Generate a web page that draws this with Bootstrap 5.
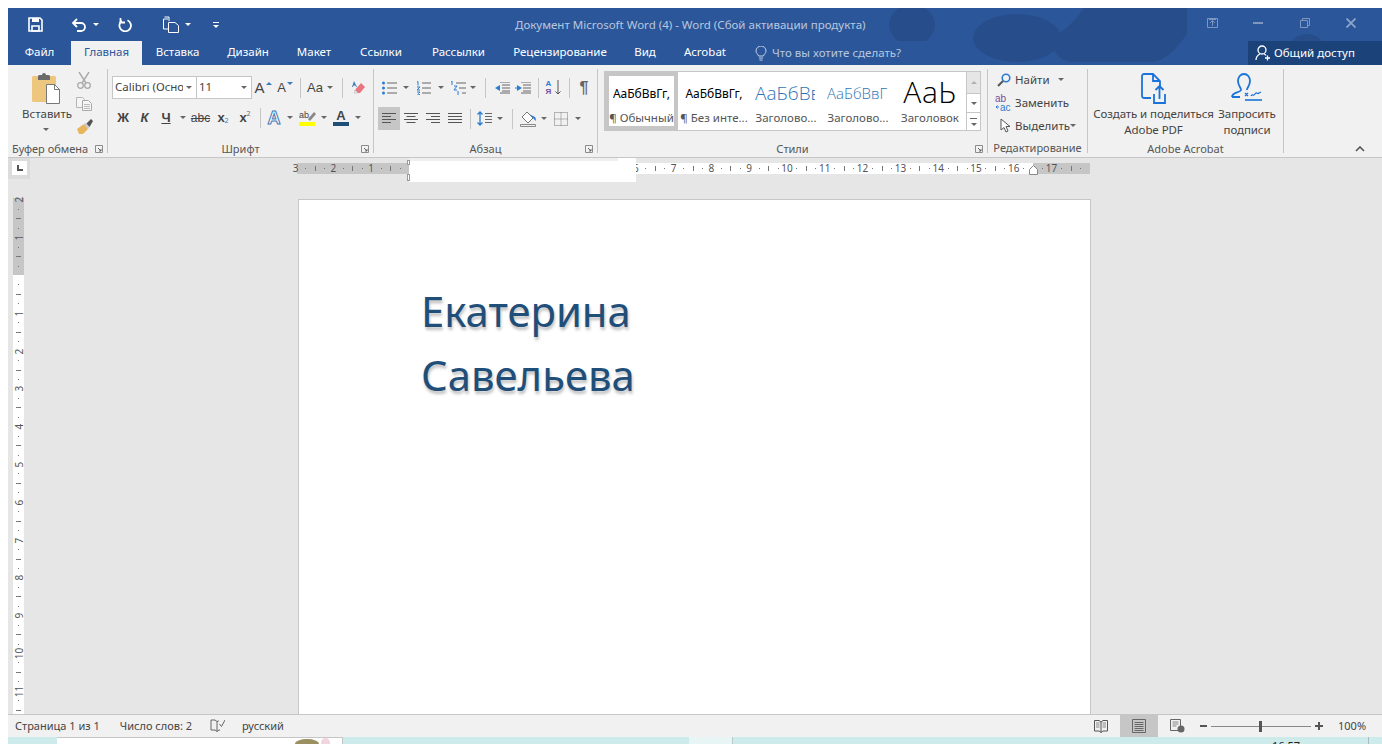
<!DOCTYPE html>
<html lang="ru">
<head>
<meta charset="UTF-8">
<meta name="viewport" content="width=device-width, initial-scale=1.0">
<title>Документ Microsoft Word (4) - Word</title>
<link rel="stylesheet" href="https://cdn.jsdelivr.net/npm/bootstrap@5.3.0/dist/css/bootstrap.min.css">
<style>
html, body { height: 744px; overflow: hidden; }
body { background: #fff; font-family: "Noto Sans", "Liberation Sans", sans-serif; font-size: 11.5px; color: #444; }
.word-win { margin-left: 8px; padding-top: 8px; height: 736px; }
svg { display: block; flex: none; }

/* шапка */
.word-head { height: 57px; background: #2b579a; position: relative; overflow: hidden; }
.head-art { position: absolute; left: 0; top: 0; }
.title-row { height: 33px; position: relative; }
.q-cell { height: 33px; flex: none; }
.q-save { width: 32px; margin-left: 11px; }
.q-undo { width: 24px; margin-left: 16px; }
.q-tri { width: 10px; }
.q-redo { width: 32px; margin-left: 8px; }
.q-new { width: 24px; margin-left: 18px; }
.q-more { width: 10px; margin-left: 18px; gap: 2px; }
.win-title { position: absolute; left: 507px; top: 8px; width: 350px; text-align: center; color: #b9c7de; font-size: 11.5px; line-height: 18px; white-space: nowrap; }
.win-btn { position: absolute; top: 0; width: 46px; height: 30px; }
.win-b1 { left: 1181px; } .win-b2 { left: 1227px; } .win-b3 { left: 1274px; } .win-b4 { left: 1320px; }
.tab-row { height: 24px; position: relative; }
.tab-row .nav-link { padding: 0; height: 24px; line-height: 22px; color: #fff; font-size: 11.5px; text-align: center; white-space: nowrap; }
.tab-row .nav-link.active-tab { background: #f1f1f1; color: #2b579a; }
.tab-file { width: 63px; } .tab-home { width: 71px; } .tab-ins { width: 71px; } .tab-des { width: 70px; }
.tab-lay { width: 62px; } .tab-ref { width: 72px; } .tab-mail { width: 83px; } .tab-rev { width: 120px; }
.tab-view { width: 50px; } .tab-acro { width: 70px; }
.tell-me { margin-left: 15px; color: #b9c7de; width: 217px; height: 24px; gap: 5px; background: #2b579a; }
.share-btn { position: absolute; left: 1240px; top: 0; width: 134px; height: 24px; background: #1c4379; color: #fff; padding-left: 7px; gap: 4px; }

/* лента */
.word-ribbon { height: 93px; background: #f1f1f1; border-bottom: 1px solid #c6c6c6; padding-top: 4px; position: relative; }
.rb-grp { height: 84px; border-right: 1px solid #c6c6c6; position: relative; flex: none; }
.g-clip { width: 100px; } .g-font { width: 266px; } .g-para { width: 224px; }
.g-styl { width: 390px; } .g-edit { width: 100px; } .g-acro { width: 196px; }
.grp-body { height: 74px; }
.grp-label { height: 10px; line-height: 12px; text-align: center; color: #555; font-size: 11px; white-space: nowrap; }
.launch { position: absolute; right: 4px; top: 76px; }
.rb-row { height: 23px; }
.cell { display: flex; align-items: center; justify-content: center; height: 100%; flex: none; }
.tri { width: 0; height: 0; border-left: 3px solid transparent; border-right: 3px solid transparent; border-top: 3px solid #666; }
.tri.tri-white { border-top-color: #fff; }
.vsep { width: 1px; height: 20px; background: #c6c6c6; }
.cw-8 { width: 8px; } .cw-10 { width: 10px; } .cw-12 { width: 12px; } .cw-16 { width: 16px; } .cw-18 { width: 18px; }
.cw-19 { width: 19px; } .cw-20 { width: 20px; } .cw-21 { width: 21px; } .cw-22 { width: 22px; } .cw-23 { width: 23px; }
.cell-on { background: #c6c6c6; }

.clip-big { width: 48px; margin-left: 14px; text-align: center; padding-top: 3px; line-height: 16px; }
.clip-big svg { margin: 0 auto 1px; }
.clip-big .tri { margin: 6px auto 0; }
.clip-small { width: 22px; margin-left: 3px; }
.clip-small .cell { height: 23px; width: 22px; }

.font-rows { padding: 7px 0 0 4px; }
.combo { height: 23px; background: #fff; border: 1px solid #c6c6c6; line-height: 20px; position: relative; white-space: nowrap; overflow: hidden; color: #444; padding-left: 2px; }
.combo-name { width: 85px; }
.combo-size { width: 56px; margin-left: -1px; }
.combo-clip { display: block; width: 68px; overflow: hidden; }
.combo .tri { position: absolute; right: 4px; top: 9px; }
.row-two { margin-top: 7px; }
.ltr { font-family: "Liberation Sans", sans-serif; color: #444; line-height: 1; }
.ltr-b { font-weight: 700; font-size: 13px; }
.ltr-i { font-style: italic; font-weight: 700; font-size: 13px; }
.ltr-u { font-weight: 700; font-size: 13px; text-decoration: underline; }
.ltr-s { font-size: 12px; text-decoration: line-through; }
.ltr-big { font-size: 15px; }
.ltr-mid { font-size: 13px; }
.sub-mark { font-size: 7px; color: #3d7ab8; }
.sup-mark { font-size: 7px; color: #666; margin-top: -7px; }
.sub-bot { margin-top: 7px; }
.cap-tri { width: 0; height: 0; border-left: 3px solid transparent; border-right: 3px solid transparent; margin: -9px 0 0 1px; }
.cap-up { border-bottom: 3px solid #3d7ab8; }
.cap-dn { border-top: 3px solid #3d7ab8; }
.effect-a { font-family: "Liberation Sans", sans-serif; font-weight: 700; font-size: 18px; color: #fff; -webkit-text-stroke: 1px #3d7ab8; line-height: 1; }
.para-body { padding-top: 7px; }
.para-one { margin-left: 6px; }
.para-two { margin: 8px 0 0 4px; }
.pil { font-family: "Liberation Sans", sans-serif; font-weight: 700; font-size: 16px; color: #666; }
.sort-ltr { font-family: "Liberation Sans", sans-serif; font-weight: 700; font-size: 8px; line-height: 8px; }
.sort-a { color: #2b7cd3; } .sort-z { color: #7a4d9e; }

/* стили */
.styl-body { padding-top: 2px; }
.gallery { margin-left: 6px; height: 60px; width: 377px; border: 1px solid #c6c6c6; background: #fff; }
.st-item { width: 72px; height: 100%; flex: none; text-align: center; overflow: hidden; padding-top: 10px; }
.st-first { width: 73px; border: 4px solid #c6c6c6; padding-top: 6px; }
.st-sample { height: 27px; line-height: 23px; white-space: nowrap; overflow: hidden; color: #000; font-size: 12px; margin: 0 3px; }
.st-h1 { font-size: 19px; color: #2e74b5; font-family: "Open Sans", sans-serif; font-weight: 300; margin: 0 7px 0 5px; text-align: left; }
.st-h2 { font-size: 15px; color: #2e74b5; font-family: "Open Sans", sans-serif; font-weight: 300; margin: 0 5px; text-align: left; }
.st-t { font-size: 30px; font-family: "Open Sans", sans-serif; font-weight: 300; height: 31px; line-height: 27px; margin-top: -4px; letter-spacing: .5px; overflow: visible; }
.st-name { white-space: nowrap; color: #555; font-size: 11.5px; line-height: 17px; }
.st-scroll { width: 14px; margin-left: auto; border-left: 1px solid #c6c6c6; }
.st-sc { border-bottom: 1px solid #c6c6c6; }
.st-up { height: 22px; background: #e6e6e6; }
.st-dn { height: 19px; }
.st-mr { height: 18px; border-bottom: 0; }
.sc-up { transform: rotate(180deg); border-top-color: #b0b0b0; }

.edit-rows { margin: -1px 0 0 7px; }
.edit-ic { width: 20px; height: 23px; }
.edit-ic + span { white-space: nowrap; }
.acro-btns { padding: 4px 0 0 3px; }
.acro-b { text-align: center; line-height: 16px; white-space: nowrap; letter-spacing: -.1px; }
.acro-b svg { margin: 0 auto 1px; }
.acro-1 { width: 125px; }
.acro-2 { width: 60px; margin-left: 1px; }
.collapse-ic { position: absolute; right: 17px; top: 81px; }

/* документ */
.doc-area { height: 556px; background: #e6e6e6; position: relative; overflow: hidden; }
.tab-sel { position: absolute; left: 0; top: 0; width: 22px; height: 21px; background: #dcdcdc; }
.tab-sel-in { position: absolute; left: 4px; top: 3px; width: 15px; height: 14px; background: #fff; }
.tab-sel-in::after { content: ""; position: absolute; left: 5px; top: 4px; width: 6px; height: 6px; border-left: 2px solid #555; border-bottom: 2px solid #555; }
.h-ruler { position: absolute; left: 289px; top: 5px; width: 793px; height: 11px; background: #c6c6c6; }
.h-ruler-on { position: absolute; left: 339px; top: 0; width: 397px; height: 11px; background: #fff; }
.v-ruler { position: absolute; left: 5px; top: 40px; width: 11px; height: 516px; background: #fff; }
.v-ruler-off { position: absolute; left: 0; top: 0; width: 11px; height: 77px; background: #c6c6c6; }
.rl-num { position: absolute; font-size: 10px; line-height: 11px; width: 12px; text-align: center; color: #555; }
.rl-tick { position: absolute; background: #777; }
.ghost-box { position: absolute; left: 401px; top: 0; width: 227px; height: 24px; background: #fff; }
.ghost-top { position: absolute; left: 0; top: 0; width: 209px; height: 3px; background: #efefef; }
.ind-mark { position: absolute; left: 399px; width: 3px; background: #fff; border: 1px solid #999; }
.ind-a { top: 2px; height: 5px; } .ind-b { top: 16px; height: 7px; }
.ind-house { position: absolute; left: 1021px; top: 7px; }
.doc-page { position: absolute; left: 290px; top: 41px; width: 793px; height: 520px; background: #fff; border: 1px solid #c6c6c6; padding: 79px 0 0 122px; }
.doc-line { margin: 0; height: 64px; line-height: 64px; font-family: "Noto Sans", sans-serif; font-size: 41.8px; color: #1f4e79; text-shadow: 1px 3px 3px rgba(0,0,0,.25); white-space: nowrap; }

/* статус */
.status-bar { height: 23px; background: #f1f1f1; border-top: 1px solid #c6c6c6; position: relative; }
.st-txt { white-space: nowrap; color: #444; font-size: 11px; }
.st-left { padding-left: 7px; }
.st-left span + span { margin-left: 20px; }
.st-book { margin: 0 17px 0 18px; }
.vw-cell { width: 38px; height: 22px; }
.zoom-minus { width: 15px; } .zoom-plus { width: 16px; }
.zoom-track { width: 100px; height: 1px; background: #888; position: relative; }
.zoom-thumb { position: absolute; left: 48px; top: -5px; width: 3px; height: 11px; background: #555; }
.zoom-pct { width: 55px; padding-left: 11px; }

/* панель задач */
.task-strip { height: 8px; background: #cdebeb; overflow: hidden; }
.task-sp1 { width: 49px; }
.task-white { width: 286px; background: #fff; border-top: 1px solid #c6c6c6; border-right: 1px solid #c6c6c6; position: relative; }
.task-sp2 { width: 346px; }
.task-pale { width: 44px; background: #e8f5f5; border-right: 1px solid #b9c9c9; }
.task-sp3 { width: 539px; }
.task-clock { width: 97px; font-size: 11px; line-height: 13px; color: #222; border-right: 1px solid #a9bcbc; padding-top: 2px; }
.blob-a { position: absolute; left: 238px; top: 1px; width: 24px; height: 10px; border-radius: 50%; background: #9a9060; }
.blob-b { position: absolute; left: 264px; top: 0; width: 9px; height: 10px; border-radius: 50%; background: #f0d5dc; }
</style>
</head>
<body>
<svg width="0" height="0" class="position-absolute">
  <symbol id="al-left" viewBox="0 0 14 12"><path d="M0 .5h14M0 3.5h9M0 6.5h14M0 9.5h9" stroke="#555" fill="none"/></symbol>
  <symbol id="al-center" viewBox="0 0 14 12"><path d="M0 .5h14M2.500 3.500h9M0 6.500h14M2.500 9.500h9" stroke="#555" fill="none"/></symbol>
  <symbol id="al-right" viewBox="0 0 14 12"><path d="M0 .5h14M5 3.500h9M0 6.500h14M5 9.500h9" stroke="#555" fill="none"/></symbol>
  <symbol id="al-just" viewBox="0 0 14 12"><path d="M0 .5h14M0 3.500h14M0 6.500h14M0 9.500h14" stroke="#555" fill="none"/></symbol>
  <symbol id="launcher" viewBox="0 0 8 8"><path d="M.5.5h7v7h-7z" fill="none" stroke="#8c8c8c"/><path d="M3 3l3 3M6 4v2H4" fill="none" stroke="#666"/></symbol>
</svg>

<div class="word-win">
  <div class="word-head">
    <svg class="head-art" width="1374" height="57" viewBox="0 0 1374 57">
      <g fill="#274e8b">
        <ellipse cx="904" cy="17" rx="23" ry="20"/>
        <ellipse cx="1009" cy="30" rx="44" ry="24"/>
        <path d="M1040 30c14-4 24-14 36-30h103v26c-10 14-22 28-36 28h-80c-10 0-20-12-23-24z"/>
        <ellipse cx="1299" cy="38" rx="16" ry="12"/>
      </g>
    </svg>
    <div class="title-row d-flex align-items-center">
      <div class="q-cell q-save d-flex align-items-center justify-content-center">
        <svg width="15" height="15" viewBox="0 0 15 15"><path d="M1 1h11l2 2v11H1z" fill="none" stroke="#fff" stroke-width="1.600"/><path d="M4 1h7v4H4z" fill="#fff"/><path d="M4 9h7v5H4z" fill="none" stroke="#fff" stroke-width="1.600"/></svg>
      </div>
      <div class="q-cell q-undo d-flex align-items-center justify-content-center">
        <svg width="16" height="14" viewBox="0 0 16 14"><path d="M6 1L2 5l4 4" fill="none" stroke="#fff" stroke-width="1.800"/><path d="M2 5h8a4 4 0 0 1 0 8H6" fill="none" stroke="#fff" stroke-width="1.800"/></svg>
      </div>
      <div class="q-cell q-tri d-flex align-items-center justify-content-center"><div class="tri tri-white"></div></div>
      <div class="q-cell q-redo d-flex align-items-center justify-content-center">
        <svg width="14" height="14" viewBox="0 0 14 14"><path d="M9.500 2.200A5.800 5.800 0 1 1 3.800 2.800" fill="none" stroke="#fff" stroke-width="1.800"/><path d="M2.500 0v4.500h4.500" fill="none" stroke="#fff" stroke-width="1.800"/></svg>
      </div>
      <div class="q-cell q-new d-flex align-items-center justify-content-center">
        <svg width="18" height="17" viewBox="0 0 18 17"><path d="M6 3H1.500v10H6" fill="none" stroke="#fff"/><path d="M2.500 1h4.500v4M6.500 6.500H13l3.500 3v7h-10z" fill="none" stroke="#fff"/></svg>
      </div>
      <div class="q-cell q-tri d-flex align-items-center justify-content-center"><div class="tri tri-white"></div></div>
      <div class="q-cell q-more d-flex flex-column align-items-center justify-content-center"><svg width="6" height="1"><rect width="6" height="1" fill="#fff"/></svg><div class="tri tri-white"></div></div>
      <div class="win-title">Документ Microsoft Word (4) - Word (Сбой активации продукта)</div>
      <div class="win-btn d-flex align-items-center justify-content-center win-b1">
        <svg width="11" height="10" viewBox="0 0 11 10"><path d="M.5.5h10v9H.5z" fill="none" stroke="#7f97bf"/><path d="M5.500 8V3M3 5l2.500-2.500L8 5M2 1.500h7" fill="none" stroke="#7f97bf"/></svg>
      </div>
      <div class="win-btn d-flex align-items-center justify-content-center win-b2">
        <svg width="10" height="2" viewBox="0 0 10 2"><path d="M0 1h10" stroke="#7f97bf" stroke-width="2"/></svg>
      </div>
      <div class="win-btn d-flex align-items-center justify-content-center win-b3">
        <svg width="10" height="10" viewBox="0 0 10 10"><path d="M.5 2.500h7v7h-7zM2.500 2.500v-2h7v7h-2" fill="none" stroke="#7f97bf"/></svg>
      </div>
      <div class="win-btn d-flex align-items-center justify-content-center win-b4">
        <svg width="10" height="10" viewBox="0 0 10 10"><path d="M.5.500l9 9M9.500.500l-9 9" stroke="#8ea4c8" stroke-width="1.800"/></svg>
      </div>
    </div>
    <div class="tab-row">
      <ul class="nav flex-nowrap">
        <li class="nav-item"><a class="nav-link tab-file" href="#">Файл</a></li>
        <li class="nav-item"><a class="nav-link tab-home active-tab" href="#">Главная</a></li>
        <li class="nav-item"><a class="nav-link tab-ins" href="#">Вставка</a></li>
        <li class="nav-item"><a class="nav-link tab-des" href="#">Дизайн</a></li>
        <li class="nav-item"><a class="nav-link tab-lay" href="#">Макет</a></li>
        <li class="nav-item"><a class="nav-link tab-ref" href="#">Ссылки</a></li>
        <li class="nav-item"><a class="nav-link tab-mail" href="#">Рассылки</a></li>
        <li class="nav-item"><a class="nav-link tab-rev" href="#">Рецензирование</a></li>
        <li class="nav-item"><a class="nav-link tab-view" href="#">Вид</a></li>
        <li class="nav-item"><a class="nav-link tab-acro" href="#">Acrobat</a></li>
        <li class="nav-item d-flex align-items-center tell-me">
          <svg width="12" height="15" viewBox="0 0 12 15"><path d="M3.500 10C3 8 1 7.500 1 5a5 5 0 0 1 10 0c0 2.500-2 3-2.500 5zM4 12h4M4.500 14h3" fill="none" stroke="#c4d0e4"/></svg>
          <span>Что вы хотите сделать?</span>
        </li>
      </ul>
      <div class="share-btn d-flex align-items-center">
        <svg width="15" height="16" viewBox="0 0 15 16"><circle cx="7" cy="5" r="4" fill="none" stroke="#fff" stroke-width="1.300"/><path d="M1 15c0-3 2-5 4-6M9 9c1 .4 1.600 .8 2 1.500M10 13h5M12.500 10.500v5" fill="none" stroke="#fff" stroke-width="1.300"/></svg>
        <span>Общий доступ</span>
      </div>
    </div>
  </div>

  <div class="word-ribbon d-flex">
    <!-- Буфер обмена -->
    <div class="rb-grp g-clip">
      <div class="grp-body d-flex">
        <div class="clip-big">
          <svg width="30" height="33" viewBox="0 0 30 33"><rect x="1" y="4" width="24" height="26" rx="1.500" fill="#eec77f"/><path d="M7 4a2 2 0 0 1 2-1h2a2 2 0 0 1 4 0h2a2 2 0 0 1 2 1v4H7z" fill="#6a6a6a"/><path d="M15.500 12.500h8l5 5v14h-13z" fill="#fff" stroke="#777"/><path d="M23.500 12.500v5h5" fill="none" stroke="#777"/></svg>
          <div>Вставить</div>
          <div class="tri"></div>
        </div>
        <div class="clip-small">
          <div class="cell"><svg width="14" height="17" viewBox="0 0 14 17"><path d="M2 0l7 11M12 0L5 11" stroke="#aaa" stroke-width="1.400" fill="none"/><circle cx="3.500" cy="13.500" r="2.800" fill="none" stroke="#aaa" stroke-width="1.300"/><circle cx="10.500" cy="13.500" r="2.800" fill="none" stroke="#aaa" stroke-width="1.300"/></svg></div>
          <div class="cell"><svg width="16" height="14" viewBox="0 0 16 14"><path d="M.5.500h6l2 2v8h-8z" fill="#f5f5f5" stroke="#b5b5b5"/><path d="M6.500 3.500h6l3 3v7h-9z" fill="#f5f5f5" stroke="#aaa"/><path d="M8 7.500h6M8 9.500h6M8 11.500h6" stroke="#bbb"/></svg></div>
          <div class="cell"><svg width="17" height="15" viewBox="0 0 17 15"><path d="M1 10l7-5 4 5-5 5H3z" fill="#e8b45c"/><path d="M8 5l4 5 1.500-1.500L10 4z" fill="#c9c9c9"/><path d="M10.500 4.500L15 0l2 2-3.500 6z" fill="#555"/></svg></div>
        </div>
      </div>
      <div class="grp-label text-start ps-1">Буфер обмена</div>
      <svg class="launch" width="8" height="8"><use href="#launcher"/></svg>
    </div>

    <!-- Шрифт -->
    <div class="rb-grp g-font">
      <div class="grp-body font-rows">
        <div class="rb-row d-flex">
          <div class="combo combo-name"><span class="combo-clip">Calibri (Осно</span><div class="tri"></div></div>
          <div class="combo combo-size">11<div class="tri"></div></div>
          <div class="cell cw-22"><span class="ltr ltr-big">A</span><span class="cap-tri cap-up"></span></div>
          <div class="cell cw-22"><span class="ltr ltr-mid">A</span><span class="cap-tri cap-dn"></span></div>
          <div class="cell cw-8"><div class="vsep"></div></div>
          <div class="cell cw-22"><span class="ltr ltr-mid">Aa</span></div>
          <div class="cell cw-8"><div class="tri"></div></div>
          <div class="cell cw-16"><div class="vsep"></div></div>
          <div class="cell cw-16"><svg width="15" height="15" viewBox="0 0 15 15"><path d="M7 13l-3-3 6-7 4 4-5 6z" fill="#e8757f"/><path d="M3 1l3 6H5L4.500 5.500h-2L2 7H1z" fill="#3d7ab8"/><path d="M4 10l3 3H3z" fill="#eee" stroke="#aaa" stroke-width=".5"/></svg></div>
        </div>
        <div class="rb-row d-flex row-two">
          <div class="cell cw-22"><span class="ltr ltr-b">Ж</span></div>
          <div class="cell cw-21"><span class="ltr ltr-i">К</span></div>
          <div class="cell cw-22"><span class="ltr ltr-u">Ч</span></div>
          <div class="cell cw-12"><div class="tri"></div></div>
          <div class="cell cw-23"><span class="ltr ltr-s">abc</span></div>
          <div class="cell cw-22"><span class="ltr ltr-b">x</span><span class="sub-mark sub-bot">2</span></div>
          <div class="cell cw-22"><span class="ltr ltr-b">x</span><span class="sup-mark">2</span></div>
          <div class="cell cw-8"><div class="vsep"></div></div>
          <div class="cell cw-20"><span class="effect-a">A</span></div>
          <div class="cell cw-12"><div class="tri"></div></div>
          <div class="cell cw-22"><svg width="17" height="16" viewBox="0 0 17 16"><path d="M9 9l6-7 2 2-6 7z" fill="#888"/><rect x="0" y="12" width="16" height="4" fill="#ff0"/><text x="0" y="8" font-size="9" fill="#444" font-family="Liberation Sans">ab</text></svg></div>
          <div class="cell cw-12"><div class="tri"></div></div>
          <div class="cell cw-22 flex-column"><span class="ltr ltr-b">A</span><svg width="16" height="4" viewBox="0 0 16 4"><rect width="16" height="4" fill="#1f4e79"/></svg></div>
          <div class="cell cw-12"><div class="tri"></div></div>
        </div>
      </div>
      <div class="grp-label">Шрифт</div>
      <svg class="launch" width="8" height="8"><use href="#launcher"/></svg>
    </div>

    <!-- Абзац -->
    <div class="rb-grp g-para">
      <div class="grp-body para-body">
        <div class="rb-row d-flex para-one">
          <div class="cell cw-18"><svg width="15" height="14" viewBox="0 0 15 14"><path d="M5 2h10M5 7h10M5 12h10" stroke="#666"/><circle cx="1.500" cy="2" r="1.500" fill="#2b7cd3"/><circle cx="1.500" cy="7" r="1.500" fill="#2b7cd3"/><circle cx="1.500" cy="12" r="1.500" fill="#2b7cd3"/></svg></div>
          <div class="cell cw-16"><div class="tri"></div></div>
          <div class="cell cw-19"><svg width="15" height="14" viewBox="0 0 15 14"><path d="M6 2h9M6 7h9M6 12h9" stroke="#666"/><path d="M1 1l1-.5v4M1 6h3L1 9h3M1 11h3l-1.500 1.500L4 14H1" fill="none" stroke="#2b7cd3"/></svg></div>
          <div class="cell cw-16"><div class="tri"></div></div>
          <div class="cell cw-18"><svg width="16" height="14" viewBox="0 0 16 14"><path d="M6 2h10M9 7h7M12 12h4" stroke="#666"/><path d="M1 .5l1-.5v4M4 5h3L4 9h3M8 10v4" fill="none" stroke="#2b7cd3"/></svg></div>
          <div class="cell cw-12"><div class="tri"></div></div>
          <div class="cell cw-12"><div class="vsep"></div></div>
          <div class="cell cw-21"><svg width="16" height="12" viewBox="0 0 16 12"><path d="M6 .5h10M8 3.500h8M8 6.500h8M8 9.500h8M6 11.500h10" stroke="#666" transform="translate(0 -.5)"/><path d="M6 3L1 6l5 3z" fill="#2b7cd3"/><path d="M3 6h3" stroke="#2b7cd3"/></svg></div>
          <div class="cell cw-21"><svg width="16" height="12" viewBox="0 0 16 12"><path d="M6 .5h10M8 3.500h8M8 6.500h8M8 9.500h8M6 11.500h10" stroke="#666" transform="translate(0 -.5)"/><path d="M2 3l5 3-5 3z" fill="#2b7cd3"/><path d="M0 6h3" stroke="#2b7cd3"/></svg></div>
          <div class="cell cw-10"><div class="vsep"></div></div>
          <div class="cell cw-21 gap-1"><div class="d-flex flex-column"><span class="sort-ltr sort-a">А</span><span class="sort-ltr sort-z">Я</span></div><svg width="6" height="15" viewBox="0 0 6 15"><path d="M3 0v14M.5 11.500L3 14l2.500-2.500" fill="none" stroke="#555"/></svg></div>
          <div class="cell cw-10"><div class="vsep"></div></div>
          <div class="cell cw-20"><span class="pil">¶</span></div>
        </div>
        <div class="rb-row d-flex para-two">
          <div class="cell cw-22 cell-on"><svg width="14" height="12"><use href="#al-left"/></svg></div>
          <div class="cell cw-22"><svg width="14" height="12"><use href="#al-center"/></svg></div>
          <div class="cell cw-22"><svg width="14" height="12"><use href="#al-right"/></svg></div>
          <div class="cell cw-22"><svg width="14" height="12"><use href="#al-just"/></svg></div>
          <div class="cell cw-8"><div class="vsep"></div></div>
          <div class="cell cw-20"><svg width="15" height="15" viewBox="0 0 15 15"><path d="M3 1v13M.5 3.500L3 1l2.500 2.500M.5 11.500L3 14l2.500-2.500" fill="none" stroke="#2b7cd3" stroke-width="1.300"/><path d="M8 2.500h7M8 5.500h7M8 8.500h7M8 11.500h7" stroke="#666"/></svg></div>
          <div class="cell cw-12"><div class="tri"></div></div>
          <div class="cell cw-12"><div class="vsep"></div></div>
          <div class="cell cw-20"><svg width="17" height="16" viewBox="0 0 17 16"><path d="M7 1l6 6-5 5-6-6z" fill="#fff" stroke="#777"/><path d="M9 3l6 3c1 1 1 3 .5 4L13 7z" fill="#2b7cd3"/><path d="M.5 13.500h15v2H.5z" fill="none" stroke="#888"/></svg></div>
          <div class="cell cw-12"><div class="tri"></div></div>
          <div class="cell cw-22"><svg width="14" height="14" viewBox="0 0 14 14"><path d="M.5.500h13v13H.5zM7 .500v13M.5 7h13" fill="none" stroke="#777" stroke-dasharray="1 1"/></svg></div>
          <div class="cell cw-12"><div class="tri"></div></div>
        </div>
      </div>
      <div class="grp-label">Абзац</div>
      <svg class="launch" width="8" height="8"><use href="#launcher"/></svg>
    </div>

    <!-- Стили -->
    <div class="rb-grp g-styl">
      <div class="grp-body styl-body">
        <div class="gallery d-flex">
          <div class="st-item st-first"><div class="st-sample">АаБбВвГг,</div><div class="st-name">¶ Обычный</div></div>
          <div class="st-item"><div class="st-sample">АаБбВвГг,</div><div class="st-name">¶ Без инте...</div></div>
          <div class="st-item"><div class="st-sample st-h1">АаБбВвГ</div><div class="st-name">Заголово...</div></div>
          <div class="st-item"><div class="st-sample st-h2">АаБбВвГ</div><div class="st-name">Заголово...</div></div>
          <div class="st-item"><div class="st-sample st-t">АаЬ</div><div class="st-name">Заголовок</div></div>
          <div class="st-scroll">
            <div class="st-sc st-up d-flex align-items-center justify-content-center"><div class="tri sc-up"></div></div>
            <div class="st-sc st-dn d-flex align-items-center justify-content-center"><div class="tri"></div></div>
            <div class="st-sc st-mr d-flex flex-column align-items-center justify-content-center gap-1"><svg width="7" height="1"><rect width="7" height="1" fill="#666"/></svg><div class="tri"></div></div>
          </div>
        </div>
      </div>
      <div class="grp-label">Стили</div>
      <svg class="launch" width="8" height="8"><use href="#launcher"/></svg>
    </div>

    <!-- Редактирование -->
    <div class="rb-grp g-edit">
      <div class="grp-body edit-rows">
        <div class="rb-row d-flex align-items-center">
          <div class="edit-ic d-flex align-items-center justify-content-end pe-1"><svg width="14" height="14" viewBox="0 0 14 14"><circle cx="9" cy="5" r="3.800" fill="none" stroke="#2b7cd3" stroke-width="1.600"/><path d="M6 8l-5 5" stroke="#555" stroke-width="2"/></svg></div>
          <span>Найти</span><div class="tri ms-2"></div>
        </div>
        <div class="rb-row d-flex align-items-center">
          <div class="edit-ic d-flex align-items-center"><svg width="18" height="18" viewBox="0 0 18 18"><text x="0" y="8" font-size="10" font-family="Liberation Sans" fill="#7a4d9e">ab</text><text x="5" y="17" font-size="10" font-family="Liberation Sans" fill="#2b7cd3">ac</text><path d="M1 13h3M2.500 11.500L1 13l1.500 1.500" fill="none" stroke="#2b7cd3"/></svg></div>
          <span>Заменить</span>
        </div>
        <div class="rb-row d-flex align-items-center">
          <div class="edit-ic d-flex align-items-center justify-content-center"><svg width="11" height="15" viewBox="0 0 11 15"><path d="M1 1v11l3-2.500 2 4.500 2-1-2-4.500h4z" fill="#fff" stroke="#555"/></svg></div>
          <span>Выделить</span><div class="tri"></div>
        </div>
      </div>
      <div class="grp-label">Редактирование</div>
    </div>

    <!-- Adobe Acrobat -->
    <div class="rb-grp g-acro">
      <div class="grp-body acro-btns d-flex">
        <div class="acro-b acro-1">
          <svg width="26" height="32" viewBox="0 0 26 32"><path d="M10 25H3a2 2 0 0 1-2-2V3a2 2 0 0 1 2-2h9l7 7v5" fill="none" stroke="#1a73d9" stroke-width="1.800"/><path d="M12 1v7h7" fill="none" stroke="#1a73d9" stroke-width="1.800"/><path d="M13 21v9h11v-9M18.500 26V13M14.500 17l4-4 4 4" fill="none" stroke="#1a73d9" stroke-width="1.800"/></svg>
          <div>Создать и поделиться</div><div>Adobe PDF</div>
        </div>
        <div class="acro-b acro-2">
          <svg width="32" height="32" viewBox="0 0 32 32"><path d="M1 24c0-5 8-4 9-7 .5-2-3-4-3-9 0-4 2.500-7 6-7s6 3 6 7c0 5-3.500 7-3 9M1 24h8" fill="none" stroke="#1a73d9" stroke-width="1.800"/><path d="M14 27h17" stroke="#1a73d9" stroke-width="1.600"/><path d="M14 20l3 3M17 20l-3 3M20 23c2-3 2 1 4-2s2 1 4-1l2-1" fill="none" stroke="#1a73d9" stroke-width="1.300"/></svg>
          <div>Запросить</div><div>подписи</div>
        </div>
      </div>
      <div class="grp-label">Adobe Acrobat</div>
    </div>
    <svg class="collapse-ic" width="10" height="6" viewBox="0 0 10 6"><path d="M1 5l4-4 4 4" fill="none" stroke="#555" stroke-width="1.600"/></svg>
  </div>

  <div class="doc-area">
    <div class="tab-sel"><div class="tab-sel-in"></div></div>
    <div class="h-ruler" id="hRuler"><div class="h-ruler-on"></div></div>
    <div class="v-ruler" id="vRuler"><div class="v-ruler-off"></div></div>
    <div class="ghost-box"><div class="ghost-top"></div></div>
    <div class="ind-mark ind-a"></div>
    <div class="ind-mark ind-b"></div>
    <svg class="ind-house" width="9" height="10" viewBox="0 0 9 10"><path d="M.5 4.500L4.500.5l4 4v5h-8z" fill="#fff" stroke="#888"/></svg>
    <div class="doc-page">
      <p class="doc-line">Екатерина</p>
      <p class="doc-line">Савельева</p>
    </div>
  </div>

  <div class="status-bar d-flex align-items-center">
    <div class="st-left st-txt d-flex align-items-center">
      <span>Страница 1 из 1</span>
      <span>Число слов: 2</span>
      <svg class="st-book" width="15" height="14" viewBox="0 0 15 14"><path d="M7 2.500L5 1H1v10h4l2 1.500V2.500zM7 12.500L9 11h1M9 2h-.5L7 2.500" fill="none" stroke="#666"/><path d="M9.500 5l2 2.500L15 1" fill="none" stroke="#666"/></svg>
      <span class="ms-0">русский</span>
    </div>
    <div class="ms-auto d-flex align-items-center st-txt">
      <div class="cell vw-cell"><svg width="14" height="14" viewBox="0 0 14 14"><path d="M.5 1.500H5L7 3l2-1.500h4.500v10.500H9L7 13.500 5 12H.5zM7 3v10.500" fill="none" stroke="#555"/><path d="M2 4h3.500M2 6h3.500M2 8h3.500M8.500 4H12M8.500 6H12M8.500 8H12" stroke="#888"/></svg></div>
      <div class="cell vw-cell cell-on"><svg width="14" height="14" viewBox="0 0 14 14"><path d="M.5.500h13v13H.5z" fill="none" stroke="#666"/><path d="M2.500 3.500h9M2.500 5.500h9M2.500 7.500h9M2.500 9.500h9M2.500 11.500h9" stroke="#666"/></svg></div>
      <div class="cell vw-cell"><svg width="15" height="14" viewBox="0 0 15 14"><path d="M.5.500h10v11H.5z" fill="none" stroke="#666"/><path d="M2.500 3h6M2.500 5h6M2.500 7h4" stroke="#888"/><circle cx="11" cy="10" r="3.500" fill="#666"/></svg></div>
      <div class="cell zoom-minus"><svg width="7" height="2"><rect width="7" height="2" fill="#555"/></svg></div>
      <div class="zoom-track"><div class="zoom-thumb"></div></div>
      <div class="cell zoom-plus"><svg width="8" height="8" viewBox="0 0 8 8"><path d="M0 4h8M4 0v8" stroke="#555" stroke-width="2"/></svg></div>
      <div class="zoom-pct">100%</div>
    </div>
  </div>

  <div class="task-strip d-flex">
    <div class="task-sp1"></div>
    <div class="task-white"><div class="blob-a"></div><div class="blob-b"></div></div>
    <div class="task-sp2"></div>
    <div class="task-pale"></div>
    <div class="task-sp3"></div>
    <div class="task-clock">16:57</div>
  </div>
</div>

<script>
// линейки: шаг 1 см = 37.8px, деления через четверть
const CM = 37.8;
const hRuler = document.getElementById("hRuler");
for (let k = -12; k <= 72; k++) {
    const x = 112 + CM * k / 4;
    if (x < -4 || x > 792) continue;
    if (k % 4 === 0) {
        if (k === 0) continue;
        const n = document.createElement("span");
        n.className = "rl-num";
        n.textContent = Math.abs(k / 4);
        n.style.left = (x - 6) + "px";
        n.style.top = "0px";
        hRuler.appendChild(n);
    } else {
        const t = document.createElement("span");
        t.className = "rl-tick";
        const isMid = k % 2 === 0;
        t.style.left = Math.round(x) + "px";
        t.style.top = isMid ? "3px" : "5px";
        t.style.width = "1px";
        t.style.height = isMid ? "5px" : "1px";
        hRuler.appendChild(t);
    }
}
const vRuler = document.getElementById("vRuler");
for (let k = -8; k <= 46; k++) {
    const y = 77 + CM * k / 4;
    if (y < 0 || y > 515) continue;
    if (k % 4 === 0) {
        if (k === 0) continue;
        const n = document.createElement("span");
        n.className = "rl-num";
        n.textContent = Math.abs(k / 4);
        n.style.left = "0px";
        n.style.top = (y - 5) + "px";
        n.style.transform = "rotate(-90deg)";
        vRuler.appendChild(n);
    } else {
        const t = document.createElement("span");
        t.className = "rl-tick";
        const isMid = k % 2 === 0;
        t.style.top = Math.round(y) + "px";
        t.style.left = isMid ? "3px" : "5px";
        t.style.height = "1px";
        t.style.width = isMid ? "5px" : "1px";
        vRuler.appendChild(t);
    }
}
</script>
<script src="https://cdn.jsdelivr.net/npm/bootstrap@5.3.0/dist/js/bootstrap.bundle.min.js"></script>
</body>
</html>
